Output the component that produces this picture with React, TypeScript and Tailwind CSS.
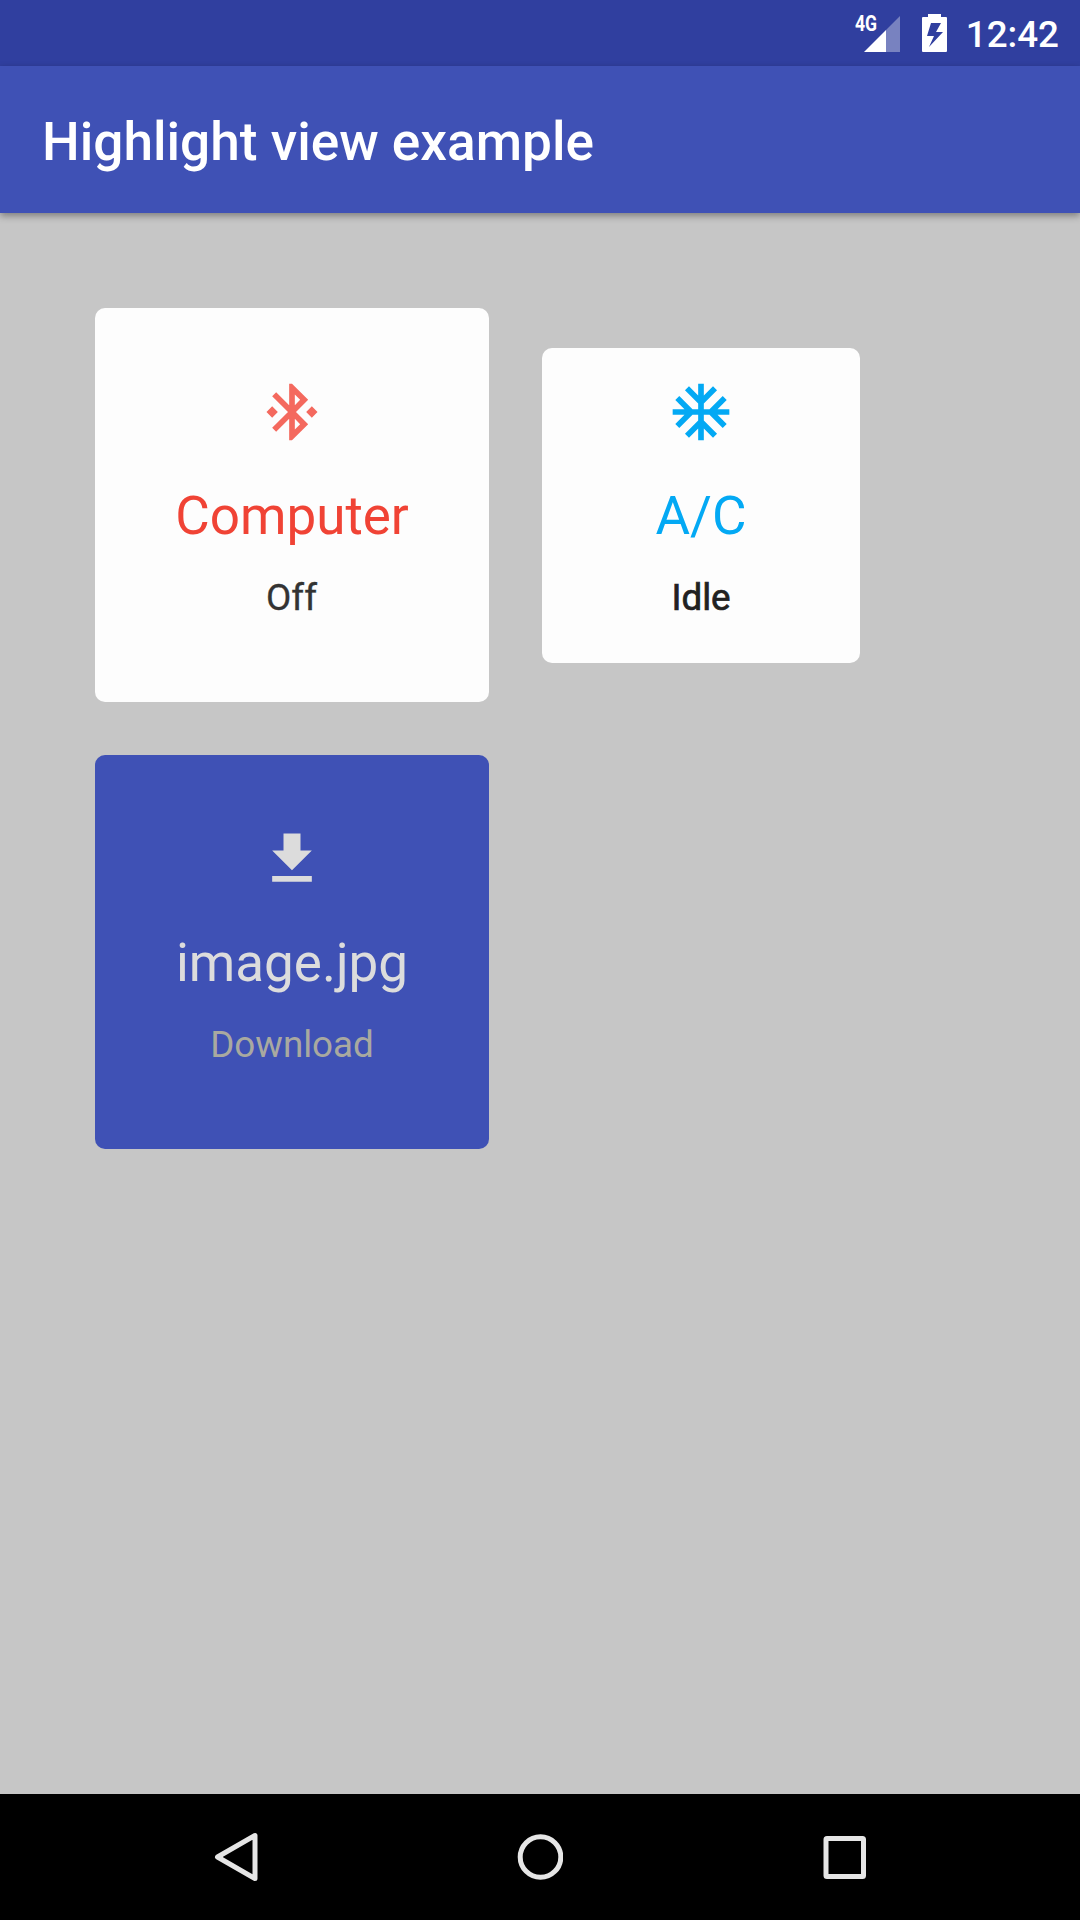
import type { ReactNode } from "react";

function Icon({ d, className }: { d: string; className: string }) {
  return (
    <svg viewBox="0 0 24 24" className={`size-[68px] shrink-0 ${className}`} fill="currentColor">
      <path d={d} />
    </svg>
  );
}

const BLUETOOTH =
  "M7 12l-2-2-2 2 2 2 2-2zm10.71-4.29L12 2h-1v7.59L6.41 5 5 6.41 10.59 12 5 17.59 6.41 19 11 14.41V22h1l5.71-5.71-4.3-4.29 4.3-4.29zM13 5.83l1.88 1.88L13 9.59V5.83zm1.88 10.46L13 18.17v-3.76l1.88 1.88zM19 10l-2 2 2 2 2-2-2-2z";
const SNOWFLAKE =
  "M22 11h-4.17l3.24-3.24-1.41-1.42L15 11h-2V9l4.66-4.66-1.42-1.41L13 6.17V2h-2v4.17L7.76 2.93 6.34 4.34 11 9v2H9L4.34 6.34 2.93 7.76 6.17 11H2v2h4.17l-3.24 3.24 1.41 1.42L9 13h2v2l-4.66 4.66 1.42 1.41L11 17.83V22h2v-4.17l3.24 3.24 1.42-1.41L13 15v-2h2l4.66 4.66 1.41-1.42L17.83 13H22z";
const DOWNLOAD = "M19 9h-4V3H9v6H5l7 7 7-7zM5 18v2h14v-2H5z";

function Card({
  className,
  icon,
  title,
  titleClass,
  status,
  statusClass,
}: {
  className: string;
  icon: ReactNode;
  title: string;
  titleClass: string;
  status: string;
  statusClass: string;
}) {
  return (
    <div className={`flex flex-col items-center rounded-[10px] ${className}`}>
      {icon}
      <div className={`mt-[39px] text-[53px] leading-[62px] ${titleClass}`}>{title}</div>
      <div className={`mt-[29px] text-[36.75px] leading-[43px] ${statusClass}`}>{status}</div>
    </div>
  );
}

function StatusBar() {
  return (
    <div className="flex h-[66px] items-start justify-end bg-[#303f9f] pr-[21px] text-white">
      <div className="relative mt-4 mr-[22px] h-9 w-[46px]">
        <span className="absolute top-[-3px] left-px origin-left scale-x-[0.8] text-[22px] leading-[22px] font-bold">
          4G
        </span>
        <svg viewBox="0 0 36 36" className="absolute right-0 bottom-0 size-9" fill="#fff">
          <path d="M22 14L36 0V36H22Z" opacity="0.35" />
          <path d="M0 36L22 14V36Z" />
        </svg>
      </div>
      <svg viewBox="0 0 25 38" className="mt-3.5 mr-[19px] h-[38px] w-[25px]" fill="#fff" fillRule="evenodd">
        <path d="M6 0H19V3H24Q25 3 25 4V37Q25 38 24 38H1Q0 38 0 37V4Q0 3 1 3H6ZM9 9L5 22H12L7 33L21 18H14L19 9Z" />
      </svg>
      <span className="mt-[13px] text-[36.75px] leading-[43px] font-medium">12:42</span>
    </div>
  );
}

function NavBar() {
  return (
    <div className="flex h-[126px] items-center bg-black pl-[213px]">
      <svg viewBox="0 0 46 50" className="h-[50px] w-[46px]" fill="none" stroke="#e6e6e6" strokeWidth="5" strokeLinejoin="round">
        <path d="M4.500 25L42 3.500V46.500Z" />
      </svg>
      <svg viewBox="0 0 46 46" className="ml-[258px] size-[46px]" fill="none" stroke="#e6e6e6" strokeWidth="5">
        <circle cx="23.500" cy="23" r="20.300" />
      </svg>
      <svg viewBox="0 0 44 44" className="ml-[260px] size-11" fill="none" stroke="#e6e6e6" strokeWidth="5" strokeLinejoin="round">
        <rect x="3" y="3.500" width="37.500" height="38" rx="1" />
      </svg>
    </div>
  );
}

export default function App() {
  return (
    <div className="flex h-[1920px] w-[1080px] flex-col overflow-hidden bg-[#c6c6c6] font-['Roboto',sans-serif]">
      <StatusBar />
      <header className="flex h-[147px] items-center bg-[#3f51b5] pt-[5px] pl-[42px] shadow-[0_3px_7px_rgba(0,0,0,0.36)]">
        <h1 className="text-[53.200px] leading-[62px] font-medium text-white">Highlight view example</h1>
      </header>
      <main className="flex flex-1 flex-col gap-[53px] pt-[95px] pl-[95px]">
        <div className="flex gap-[53px]">
          <Card
            className="h-[394px] w-[394px] bg-[#fdfdfd] pt-[70px]"
            icon={<Icon d={BLUETOOTH} className="text-[#f4695e]" />}
            title="Computer"
            titleClass="text-[#f04335]"
            status="Off"
            statusClass="text-[#333333] pr-px [-webkit-text-stroke:0.3px_#333333]"
          />
          <Card
            className="mt-10 h-[315px] w-[318px] bg-[#fdfdfd] pt-[30px]"
            icon={<Icon d={SNOWFLAKE} className="text-[#03a9f4]" />}
            title="A/C"
            titleClass="text-[#03a9f4]"
            status="Idle"
            statusClass="text-[#212121] [-webkit-text-stroke:0.7px_#212121]"
          />
        </div>
        <Card
          className="h-[394px] w-[394px] bg-[#3f51b5] pt-[70px]"
          icon={<Icon d={DOWNLOAD} className="text-[#dcdcdc]" />}
          title="image.jpg"
          titleClass="text-[#dcdcdc]"
          status="Download"
          statusClass="text-[#a9a9a0]"
        />
      </main>
      <NavBar />
    </div>
  );
}
